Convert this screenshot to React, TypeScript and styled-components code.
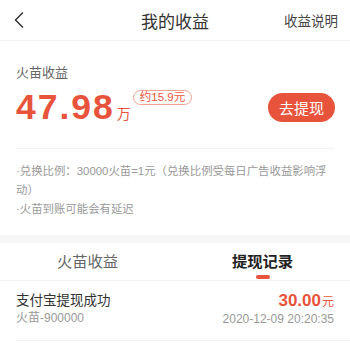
import styled, { createGlobalStyle } from "styled-components";

const GlobalStyle = createGlobalStyle`
  html, body {
    margin: 0;
    padding: 0;
    background: #ffffff;
  }
  body {
    font-family: "Liberation Sans", "Noto Sans CJK SC", sans-serif;
    color: #333;
  }
`;

const RED = "#e8533b";

const Page = styled.div`
  width: 350px;
  background: #fff;
`;

const Header = styled.div`
  height: 40px;
  display: grid;
  grid-template-columns: 80px 1fr 80px;
  align-items: center;
  border-bottom: 1px solid #f3f3f3;
`;

const BackBtn = styled.div`
  padding-left: 14px;
  display: flex;
  align-items: center;
`;

const Title = styled.div`
  text-align: center;
  font-size: 17px;
  color: #333;
`;

const HeaderLink = styled.div`
  text-align: right;
  padding-right: 12px;
  font-size: 13.5px;
  color: #444;
`;

const Summary = styled.div`
  padding: 23px 16px 0;
`;

const Label = styled.div`
  font-size: 13px;
  line-height: 18px;
  color: #666;
`;

const AmountRow = styled.div`
  margin-top: 7px;
  height: 36px;
  display: flex;
  align-items: center;
  justify-content: space-between;
`;

const AmountGroup = styled.div`
  display: flex;
  align-items: baseline;
  height: 36px;
`;

const Number = styled.span`
  font-size: 35.5px;
  line-height: 36px;
  font-weight: 700;
  letter-spacing: 2px;
  color: ${RED};
`;

const Unit = styled.span`
  font-size: 14px;
  margin-left: 2px;
  color: ${RED};
`;

const Pill = styled.span`
  align-self: flex-start;
  margin: 1px 0 0 2px;
  height: 13px;
  padding: 0 6px;
  border: 1px solid #f0a190;
  border-radius: 8px;
  font-size: 11.5px;
  line-height: 13px;
  color: ${RED};
`;

const CashButton = styled.button`
  width: 67px;
  height: 29px;
  border: none;
  border-radius: 15px;
  background: ${RED};
  color: #fff;
  font-family: "Noto Sans CJK SC", sans-serif;
  font-size: 15px;
  padding: 0;
  margin-right: -1px;
`;

const Divider = styled.div`
  margin-top: 23px;
  height: 1px;
  background: #f2f2f2;
`;

const Notes = styled.div`
  padding: 13px 0 16px;
  font-size: 11.4px;
  line-height: 19px;
  color: #999;
`;

const Band = styled.div`
  height: 8px;
  background: #f6f6f6;
`;

const Tabs = styled.div`
  display: flex;
  height: 37px;
  border-bottom: 1px solid #f3f3f3;
`;

const Tab = styled.div<{ $active?: boolean }>`
  flex: 1;
  display: flex;
  flex-direction: column;
  align-items: center;
  padding-top: 10px;
  font-size: 15.3px;
  line-height: 18px;
  color: ${(p) => (p.$active ? "#222" : "#666")};
  font-weight: ${(p) => (p.$active ? 600 : 400)};
`;

const Indicator = styled.div`
  margin-top: 4px;
  width: 14px;
  height: 4px;
  border-radius: 2px;
  background: ${RED};
`;

const Record = styled.div`
  margin-left: 16px;
  padding: 11px 16px 12px 0;
  display: flex;
  justify-content: space-between;
  border-bottom: 1px solid #f3f3f3;
`;

const Col = styled.div<{ $right?: boolean }>`
  display: flex;
  flex-direction: column;
  align-items: ${(p) => (p.$right ? "flex-end" : "flex-start")};
`;

const RecordTitle = styled.div`
  font-size: 13.5px;
  line-height: 18px;
  color: #333;
`;

const Sub = styled.div`
  font-size: 12px;
  line-height: 17px;
  color: #999;
`;

const Money = styled.div`
  line-height: 18px;
  color: ${RED};
  font-size: 17px;
  font-weight: 700;
  span {
    font-size: 12px;
    font-weight: 400;
    margin-left: 1px;
  }
`;

export default function App() {
  return (
    <Page>
      <GlobalStyle />
      <Header>
        <BackBtn>
          <svg width="10" height="16" viewBox="0 0 10 16">
            <polyline
              points="8.5,1 1.5,8 8.5,15"
              fill="none"
              stroke="#333"
              strokeWidth="1.5"
              strokeLinecap="round"
              strokeLinejoin="round"
            />
          </svg>
        </BackBtn>
        <Title>我的收益</Title>
        <HeaderLink>收益说明</HeaderLink>
      </Header>
      <Summary>
        <Label>火苗收益</Label>
        <AmountRow>
          <AmountGroup>
            <Number>47.98</Number>
            <Unit>万</Unit>
            <Pill>约15.9元</Pill>
          </AmountGroup>
          <CashButton>去提现</CashButton>
        </AmountRow>
        <Divider />
        <Notes>
          <div>·兑换比例：30000火苗=1元（兑换比例受每日广告收益影响浮动）</div>
          <div>·火苗到账可能会有延迟</div>
        </Notes>
      </Summary>
      <Band />
      <Tabs>
        <Tab>火苗收益</Tab>
        <Tab $active>
          提现记录
          <Indicator />
        </Tab>
      </Tabs>
      <Record>
        <Col>
          <RecordTitle>支付宝提现成功</RecordTitle>
          <Sub>火苗-900000</Sub>
        </Col>
        <Col $right>
          <Money>
            30.00<span>元</span>
          </Money>
          <Sub>2020-12-09 20:20:35</Sub>
        </Col>
      </Record>
    </Page>
  );
}
